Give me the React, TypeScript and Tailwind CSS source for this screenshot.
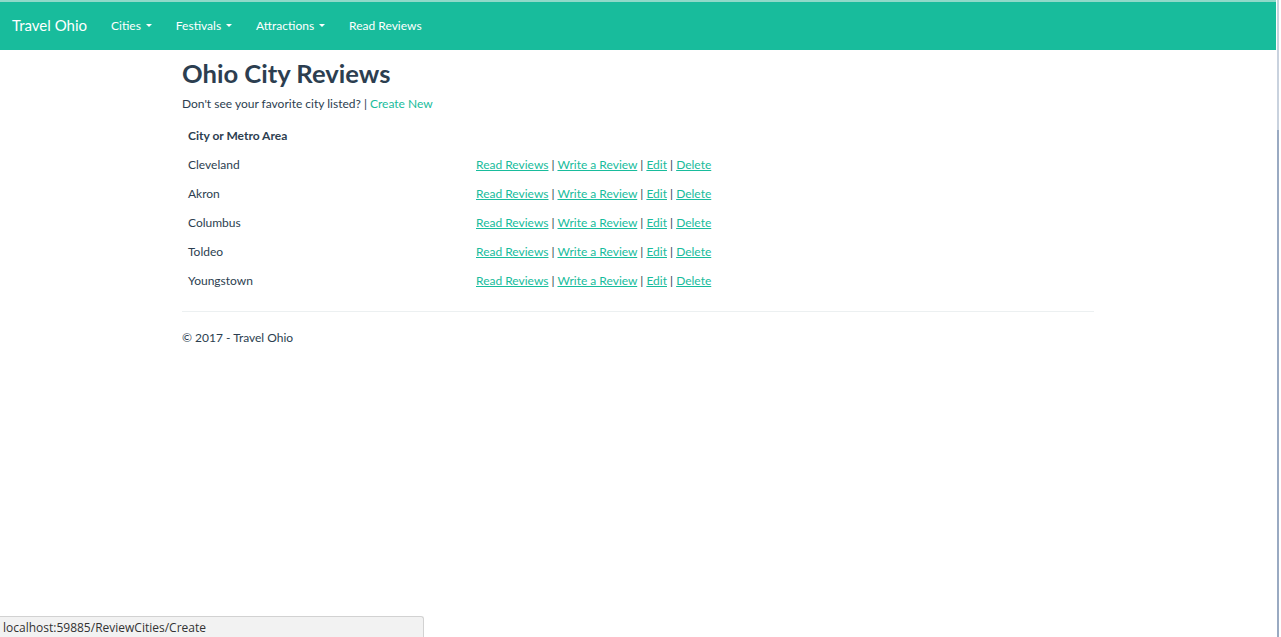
import React from 'react';

const cities = ['Cleveland', 'Akron', 'Columbus', 'Toldeo', 'Youngstown'];

const NavDrop: React.FC<{ label: string }> = ({ label }) => (
  <a href="#" className="flex items-center px-[12px] text-white">
    {label}
    <span className="ml-[5px] mt-[1px] inline-block border-x-[3.5px] border-t-[3.5px] border-x-transparent border-t-white"></span>
  </a>
);

const RowLinks: React.FC = () => (
  <>
    <a href="#" className="text-[#18bc9c] underline">Read Reviews</a> |{' '}
    <a href="#" className="text-[#18bc9c] underline">Write a Review</a> |{' '}
    <a href="#" className="text-[#18bc9c] underline">Edit</a> |{' '}
    <a href="#" className="text-[#18bc9c] underline">Delete</a>
  </>
);

export default function App() {
  return (
    <div className="relative flex h-[637px] w-[1281px] overflow-hidden bg-white font-['Lato','Liberation_Sans',sans-serif] text-[12px] leading-[17px] text-[#2c3e50]">
      <div className="w-[1276px] shrink-0">
        {/* navbar */}
        <div className="h-[2px] bg-[#8fd9c9]"></div>
        <nav className="flex h-[48px] items-center bg-[#18bc9c] pb-[2px] text-[12px]">
          <a href="#" className="px-[12px] text-[15px] text-white">Travel Ohio</a>
          <NavDrop label="Cities" />
          <NavDrop label="Festivals" />
          <NavDrop label="Attractions" />
          <a href="#" className="px-[12px] text-white">Read Reviews</a>
        </nav>

        <div className="mx-auto w-[936px] px-[12px]">
          <h2 className="mb-[7px] mt-[9px] text-[25.6px] font-bold leading-[29px]">Ohio City Reviews</h2>
          <p className="mb-[9px]">
            Don't see your favorite city listed? | <a href="#" className="text-[#18bc9c]">Create New</a>
          </p>

          <table className="mb-[16px] w-full border-collapse">
            <thead>
              <tr className="h-[29px]">
                <th className="w-[288px] px-[6px] text-left font-bold">City or Metro Area</th>
                <th></th>
              </tr>
            </thead>
            <tbody>
              {cities.map((c) => (
                <tr key={c} className="h-[29px]">
                  <td className="px-[6px]">{c}</td>
                  <td className="px-[6px]">
                    <RowLinks />
                  </td>
                </tr>
              ))}
            </tbody>
          </table>

          <hr className="border-t border-[#ecf0f1]" />
          <footer className="pt-[17px]">
            <p>© 2017 - Travel Ohio</p>
          </footer>
        </div>
      </div>

      {/* window edge */}
      <div className="flex w-[5px] shrink-0 flex-col pl-[1px]">
        <div className="h-[130px] w-[2px] bg-[#c9d2de]"></div>
        <div className="w-[2px] flex-1 bg-[#9aaac2]"></div>
      </div>

      {/* browser status bar */}
      <div className="absolute bottom-0 left-0 flex h-[21px] w-[424px] items-center rounded-tr-[3px] border-r border-t border-[#d2d2d2] bg-[#f2f2f2] pl-[3px] font-['Open_Sans','Noto_Sans',sans-serif] text-[12px] text-[#333]">
        localhost:59885/ReviewCities/Create
      </div>
    </div>
  );
}
